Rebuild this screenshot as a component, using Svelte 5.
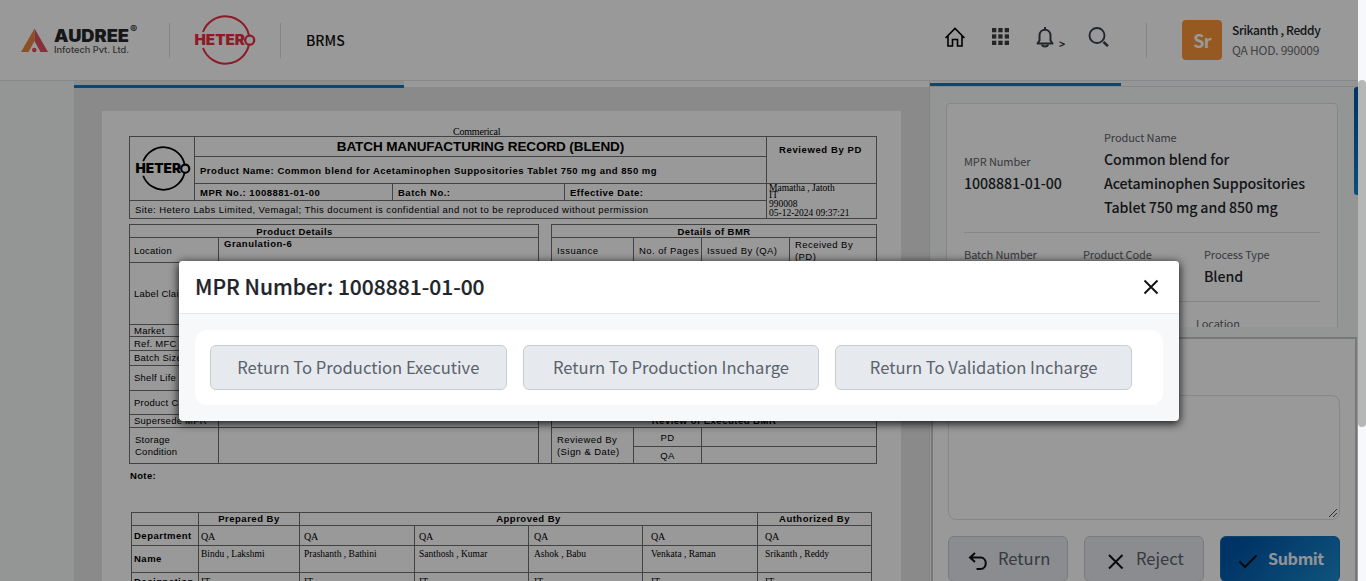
<script>
  const labels = [
    { text: 'Location', h: 25 },
    { text: 'Label Claim', h: 62 },
    { text: 'Market', h: 12 },
    { text: 'Ref. MFC No.', h: 14 },
    { text: 'Batch Size', h: 15 },
    { text: 'Shelf Life', h: 25 },
    { text: 'Product Code', h: 24 },
    { text: 'Supersede MPR', h: 13 }
  ];
  const approvers = [
    { name: 'Bindu , Lakshmi', pad: 2 },
    { name: 'Prashanth , Bathini', pad: 4 },
    { name: 'Santhosh , Kumar', pad: 4 },
    { name: 'Ashok , Babu', pad: 5 },
    { name: 'Venkata , Raman', pad: 8 },
    { name: 'Srikanth , Reddy', pad: 7 }
  ];
  const actions = ['Return To Production Executive', 'Return To Production Incharge', 'Return To Validation Incharge'];
</script>

{#snippet hetero(color, size)}
  <svg class="hetero" width={size} height={size * 50 / 60} viewBox="0 0 60 50" style:color={color}>
    <path d="M8 17A24 24 0 0 1 54 20.500M8 33A24 24 0 0 0 54 29.500" fill="none" stroke="currentColor" stroke-width="2" />
    <text x="-0.500" y="30.300" textLength="50.500" lengthAdjust="spacingAndGlyphs" font-size="14.500" fill="currentColor">HETER</text>
    <circle cx="54.700" cy="25.200" r="4.500" fill="none" stroke="currentColor" stroke-width="2.300" />
  </svg>
{/snippet}

<div class="app">
  <div class="page">
    <header>
      <svg class="audree" width="120" height="34" viewBox="0 0 120 34">
        <path d="M1 29L14.500 5.500V18L8.500 29Z" fill="#e8883c" />
        <path d="M14.500 5.500L28 29H20.500L14.500 18Z" fill="#e0505f" />
        <circle cx="14.300" cy="27" r="2.300" fill="#e0505f" />
        <text x="34" y="18.800" textLength="75" lengthAdjust="spacingAndGlyphs" class="brand">AUDREE</text>
        <text x="34" y="29.500" textLength="75" lengthAdjust="spacingAndGlyphs" class="sub">Infotech Pvt. Ltd.</text>
        <text x="110" y="10" class="reg">®</text>
      </svg>
      <i class="rule r1"></i>
      {@render hetero('#e8303f', 60)}
      <i class="rule r2"></i>
      <span class="app-name">BRMS</span>
      <nav>
        <svg width="22" height="22" viewBox="0 0 22 22"><path d="M1.500 12L11 2.500L20.500 12M4 10V20H8.500V13.500H13.500V20H18V10" fill="none" stroke="#000" stroke-width="1.600" /></svg>
        <svg width="18" height="18" viewBox="0 0 18 18" fill="#3f3f42">
          {#each [0, 6.3, 12.7] as y}{#each [0, 6.3, 12.7] as x}<rect {x} {y} width="4.300" height="4.300" />{/each}{/each}
        </svg>
        <svg width="18" height="22" viewBox="0 0 18 22" fill="none" stroke="#3a4048" stroke-width="2"><path d="M9 1V4M3.500 14.500V9.500C3.500 1.700 14.500 1.700 14.500 9.500V14.500L16.500 17.600H1.500Z" stroke-linejoin="round" /><path d="M6 18.500C6.500 21 11.500 21 12 18.500" /></svg>
        <b class="chev">&gt;</b>
        <svg class="search" width="22" height="22" viewBox="0 0 22 22" fill="none" stroke="#3a4048"><circle cx="9" cy="9.500" r="7.500" stroke-width="1.900" /><path d="M15.500 16L20 20.200" stroke-width="2.500" /></svg>
      </nav>
      <i class="rule r3"></i>
      <div class="avatar">Sr</div>
      <div class="user"><span class="uname">Srikanth , Reddy</span><span class="urole">QA HOD. 990009</span></div>
    </header>

    <main>
      <aside></aside>
      <section class="viewer">
        <div class="tabs"><div class="tab"></div></div>
        <div class="canvas">
          <div class="sheet">
            <div class="kind">Commerical</div>
            <div class="t1">
              <div class="c logo">{@render hetero('#000', 54)}</div>
              <div class="c title">BATCH MANUFACTURING RECORD (BLEND)</div>
              <div class="c rev">Reviewed By PD</div>
              <div class="c pname">Product Name: Common blend for Acetaminophen Suppositories Tablet 750 mg and 850 mg</div>
              <div class="c m1">MPR No.: 1008881-01-00</div>
              <div class="c m2">Batch No.:</div>
              <div class="c m3">Effective Date:</div>
              <div class="c sign"><span>Mamatha , Jatoth</span><span class="it">IT</span><span class="id">990008</span><span>05-12-2024 09:37:21</span></div>
              <div class="c site">Site: Hetero Labs Limited, Vemagal; This document is confidential and not to be reproduced without permission</div>
            </div>
            <div class="t2">
              <div class="left">
                <div class="c head">Product Details</div>
                {#each labels as l, i}
                  <div class="lrow" style:height="{l.h}px">
                    <div class="c lab">{l.text}</div>
                    <div class="c val">{i === 0 ? 'Granulation-6' : ''}</div>
                  </div>
                {/each}
                <div class="lrow last"><div class="c lab">Storage<br />Condition</div><div class="c val"></div></div>
              </div>
              <div class="gap"></div>
              <div class="right">
                <div class="c head">Details of BMR</div>
                <div class="iss">
                  <div class="c">Issuance</div><div class="c">No. of Pages</div><div class="c">Issued By (QA)</div><div class="c rec">Received By<br />(PD)</div>
                </div>
                <div class="c blank"></div>
                <div class="c head exe">Review of Executed BMR</div>
                <div class="exec">
                  <div class="c who">Reviewed By<br />(Sign &amp; Date)</div>
                  <div class="c mid">PD</div><div class="c"></div>
                  <div class="c mid qa">QA</div><div class="c"></div>
                </div>
              </div>
            </div>
            <div class="note">Note:</div>
            <div class="t3">
              <div class="c"></div><div class="c h">Prepared By</div><div class="c h span">Approved By</div><div class="c h">Authorized By</div>
              <div class="c k">Department</div>
              {#each approvers as a}<div class="c q" style:padding-left="{a.pad}px">QA</div>{/each}
              <div class="c k">Name</div>
              {#each approvers as a}<div class="c n" style:padding-left="{a.pad}px">{a.name}</div>{/each}
              <div class="c k d">Designation</div>
              {#each approvers as a}<div class="c n d" style:padding-left="{a.pad}px">IT</div>{/each}
            </div>
          </div>
        </div>
      </section>

      <section class="side">
        <div class="stabs"><div class="stab"></div></div>
        <div class="scroll">
          <div class="card">
            <div class="row one">
              <div><span class="label">MPR Number</span><strong>1008881-01-00</strong></div>
              <div><span class="label">Product Name</span><strong>Common blend for<br />Acetaminophen Suppositories<br />Tablet 750 mg and 850 mg</strong></div>
            </div>
            <div class="row two">
              <div><span class="label">Batch Number</span></div>
              <div><span class="label">Product Code</span></div>
              <div><span class="label">Process Type</span><strong>Blend</strong></div>
            </div>
            <div class="row three"><div><span class="label">Location</span></div></div>
          </div>
          <div class="thumb"></div>
        </div>
        <div class="review">
          <div class="area">
            <svg width="10" height="10" viewBox="0 0 10 10" stroke="#555" stroke-width="1"><path d="M1 9L9 1M5 9L9 5" /></svg>
          </div>
          <div class="btns">
            <div class="btn"><svg width="20" height="20" viewBox="0 0 20 20"><path d="M7 2L2 6.500L7 11M2 6.500H12.500C19.500 6.500 19.500 18 12.500 18H8.500" fill="none" stroke="#111" stroke-width="2" /></svg><span>Return</span></div>
            <div class="btn"><svg width="20" height="20" viewBox="0 0 20 20"><path d="M3 4L16.500 17.500M16.500 4L3 17.500" fill="none" stroke="#111" stroke-width="2" /></svg><span>Reject</span></div>
            <div class="btn primary"><svg width="20" height="20" viewBox="0 0 20 20"><path d="M1.500 10.500L7 16L18.500 4.500" fill="none" stroke="#111" stroke-width="2" /></svg><span>Submit</span></div>
          </div>
        </div>
      </section>
    </main>
    <div class="backdrop"></div>
  </div>
  <div class="bar"><div class="grip"></div></div>

  <div class="modal">
    <div class="mhead"><h4>MPR Number: 1008881-01-00</h4>
      <svg width="16" height="16" viewBox="0 0 16 16"><path d="M1.500 1.500L14.500 14.500M14.500 1.500L1.500 14.500" stroke="#111" stroke-width="1.900" /></svg>
    </div>
    <div class="mbody"><div class="mcard">{#each actions as a}<button>{a}</button>{/each}</div></div>
  </div>
</div>

<style>
  :global(body) { overflow: hidden; }
  .app, .app * { box-sizing: border-box; }
  .app { position: relative; display: flex; width: 1366px; height: 581px; overflow: hidden; background: #fff; font-family: "Noto Sans CJK SC", "Noto Sans", sans-serif; color: #212529; }
  .page { position: relative; width: 1358px; height: 581px; overflow: hidden; display: flex; flex-direction: column; }
  .backdrop { position: absolute; inset: 0; background: rgba(0, 0, 0, .4); }
  .bar { width: 8px; background: #f7f8fc; padding-top: 80px; }
  .grip { height: 347px; border-radius: 4px; background: #b5b7b6; }

  header { flex: none; height: 81px; border-bottom: 1px solid #e2e3ea; display: flex; align-items: center; padding-left: 20px; background: #fff; }
  .audree { flex: none; margin-bottom: 1px; }
  .audree text { font-family: Inter, sans-serif; fill: #26272b; }
  .audree .brand { font-size: 17px; font-weight: 900; }
  .audree .sub { font-size: 9px; font-weight: 500; fill: #555; }
  .audree .reg { font-size: 11px; font-weight: 700; }
  .hetero { flex: none; overflow: visible; }
  .hetero text { font-family: Inter, sans-serif; font-weight: 900; letter-spacing: 0; }
  .rule { flex: none; width: 1px; height: 35px; background: #dcdee3; }
  .r1 { margin: 0 25px 0 29px; }
  .r2 { margin: 0 25px 0 25px; }
  .app-name { width: 60px; font-size: 14px; font-weight: 500; line-height: 20px; color: #111; }
  nav { display: flex; align-items: center; margin-left: 577px; height: 24px; margin-bottom: 7px; width: 203px; }
  nav svg { flex: none; }
  nav svg:nth-of-type(1) { margin-left: 1px; }
  nav svg:nth-of-type(2) { margin-left: 26px; }
  nav svg:nth-of-type(3) { margin-left: 26px; }
  .chev { font: 700 11px/12px "Noto Sans", sans-serif; margin: 15px 0 0 5px; width: 10px; color: #333; }
  nav svg.search { margin-left: 19px; }
  .r3 { margin-right: 35px; }
  .avatar { width: 40px; height: 40px; border-radius: 4px; background: #fa9537; color: #fff; font-size: 18px; font-weight: 700; line-height: 40px; text-align: center; letter-spacing: -.8px; }
  .user { margin: 0 0 1px 10px; display: flex; flex-direction: column; white-space: nowrap; font-size: 12px; line-height: 20px; }
  .uname { font-weight: 500; letter-spacing: -.36px; }
  .urole { color: #6c6c70; letter-spacing: -.25px; }

  main { display: flex; height: 500px; }
  aside { width: 74px; background: #f5faf8; }
  .viewer { width: 855px; }
  .tabs { height: 6px; background: #fff; }
  .tab { width: 330px; height: 7px; background: #e0f0f5; border-bottom: 3px solid #0a79c9; position: relative; }
  .canvas { height: 494px; background: #e7e7e7; padding: 24px 0 0 28px; }
  .sheet { width: 799px; height: 470px; background: #fff; padding: 15px 0 0 27px; overflow: hidden; font: 9.5px/12px "Liberation Sans", Arial, sans-serif; color: #000; letter-spacing: .5px; white-space: nowrap; }
  .c { border-top: 1px solid #707070; border-left: 1px solid #707070; overflow: hidden; }
  .kind { font: 10px/12px "Liberation Serif", serif; letter-spacing: -.2px; width: 48px; margin-left: 324px; height: 10px; }
  .t1 { width: 748px; display: grid; grid-template-columns: 65px 198px 172px 202px 110px; grid-template-rows: 20px 27px 17px 18px; border: solid #707070; border-width: 0 1px 1px 0; font-weight: 700; }
  .logo { grid-row: 1 / 4; padding: 9px 0 0 6px; }
  .title { grid-column: 2 / 5; text-align: center; font-size: 13.5px; line-height: 19px; letter-spacing: -.1px; }
  .rev { grid-column: 5; grid-row: 1 / 3; text-align: center; padding: 7px 2px 0 0; letter-spacing: .6px; }
  .pname { grid-column: 2 / 5; grid-row: 2; padding: 8px 0 0 5px; letter-spacing: .515px; }
  .m1, .m2, .m3 { padding: 3px 0 0 5px; }
  .sign { grid-row: 3 / 5; grid-column: 5; font: 9.5px/9px "Liberation Serif", serif; display: flex; flex-direction: column; padding-left: 2px; letter-spacing: 0; }
  .it { margin-top: -2px; }
  .site { grid-row: 4; grid-column: 1 / 5; font-weight: 400; padding: 3px 0 0 5px; letter-spacing: .43px; }
  .t2 { display: flex; width: 748px; margin-top: 5px; height: 240px; border-bottom: 1px solid #707070; }
  .left { width: 410px; border-right: 1px solid #707070; }
  .gap { width: 12px; }
  .right { width: 326px; border-right: 1px solid #707070; letter-spacing: .43px; }
  .head { height: 13px; font-weight: 700; text-align: center; line-height: 13px; }
  .exe { line-height: 12px; letter-spacing: .5px; }
  .left .head { padding-right: 79px; letter-spacing: .45px; }
  .lrow { display: flex; }
  .lab { width: 89px; padding-left: 4px; display: flex; align-items: center; letter-spacing: .25px; }
  .lrow:nth-child(2) .lab { padding-top: 2px; }
  .val { flex: 1; padding-left: 5px; font-weight: 700; line-height: 11px; }
  .last { height: 37px; } .last .lab { padding-left: 5px; }
  .iss { display: grid; grid-template-columns: 82px 68px 88px 87px; height: 25px; }
  .iss .c { padding-left: 5px; line-height: 26px; } .iss .c.rec { line-height: 12px; padding-top: 1px; }
  .blank { height: 152px; }
  .exec { display: grid; grid-template-columns: 82px 68px 175px; grid-template-rows: 19px 18px; }
  .who { grid-row: 1 / 3; padding: 6px 0 0 5px; }
  .mid { text-align: center; line-height: 19px; }
  .mid.qa { line-height: 17px; }
  .note { font-weight: 700; margin: 6px 0 0 1px; height: 42px; letter-spacing: .35px; }
  .t3 { width: 741px; margin-left: 2px; display: grid; grid-template-columns: 67px 101px 115px 114px 114px 115px 114px; grid-template-rows: 13px 20px 27px 27px; border-right: 1px solid #707070; }
  .h { font-weight: 700; text-align: center; } .span { grid-column: 3 / 7; }
  .k { font-weight: 700; padding-left: 2px; display: flex; align-items: center; letter-spacing: .5px; }
  .q, .n { font: 10px/12px "Liberation Serif", serif; padding-top: 5px; letter-spacing: -.1px; }
  .n { font-size: 9.5px; padding-top: 2px; letter-spacing: 0; }
  .c.d { padding-top: 4px; line-height: 10px; align-items: flex-start; }

  .side { width: 429px; background: #f7faf9; border-left: 1px solid #d9dadd; display: flex; flex-direction: column; }
  .stabs { flex: none; height: 6px; border-bottom: 1px solid #e0e1e7; }
  .stab { width: 191px; height: 5px; border-bottom: 3px solid #0a79c9; }
  .scroll { flex: none; height: 240px; overflow: hidden; display: flex; justify-content: space-between; padding-left: 16px; }
  .card { margin-top: 16px; width: 392px; height: 330px; background: #fff; border: 1px solid #dde2e3; border-radius: 4px; padding: 22px 17px 0 17px; }
  .thumb { width: 4px; height: 108px; border-radius: 3px 0 0 3px; background: linear-gradient(#0057a8, #1681c4); }
  .row { display: grid; border-bottom: 1px solid #dde0e2; white-space: nowrap; }
  .label { display: block; font-size: 11px; line-height: 20px; color: #5c6066; letter-spacing: -.1px; }
  .row strong { display: block; font-size: 14.2px; line-height: 24px; font-weight: 500; color: #212529; letter-spacing: -.1px; }
  .one { grid-template-columns: 140px 1fr; align-items: center; height: 107px; padding-bottom: 12px; }
  .two { grid-template-columns: 119px 121px 1fr; height: 69px; padding-top: 11px; }
  .three { border: 0; padding: 11px 0 0 232px; }
  .review { flex: none; height: 244px; margin: 10px 1px 0 1px; border: 2px solid #c7c8ca; border-bottom: 0; background: #fff; padding: 56px 15px 0 15px; }
  .area { width: 392px; height: 125px; border: 1px solid #e0e1e3; border-radius: 8px; display: flex; align-items: flex-end; justify-content: flex-end; padding: 1px; }
  .btns { display: flex; gap: 16px; width: 392px; margin-top: 16px; }
  .btn { width: 120px; height: 46px; border: 1px solid #ccced3; border-radius: 6px; background: #e6e9ee; display: flex; align-items: center; padding-left: 19px; gap: 10px; font-size: 16.6px; color: #5a626b; }
  .btn svg { flex: none; margin-top: 3px; } .btn span { line-height: 24px; margin-top: -3px; }
  .btn:nth-child(2) { padding-left: 21px; }
  .btn.primary { background: linear-gradient(135deg, #0056ab 15%, #1a8ccf); border-color: #1470b5; color: #f4f6f8; font-weight: 700; font-size: 16.2px; letter-spacing: -.4px; padding-left: 17px; }

  .modal { position: absolute; left: 179px; top: 261px; width: 1000px; height: 160px; border-radius: 4px; background: #f7f8fa; box-shadow: 0 2px 9px 1px rgba(0, 0, 0, .8); overflow: hidden; }
  .mhead { height: 53px; background: #fff; border-bottom: 1px solid #e6e8ec; display: flex; align-items: center; justify-content: space-between; padding: 0 20px 0 16px; }
  h4 { margin: -2px 0 0; font-size: 21px; line-height: 30px; font-weight: 500; white-space: nowrap; -webkit-text-stroke: .2px #212529; }
  .mbody { padding: 16px; }
  .mcard { height: 75px; width: 968px; background: #fff; border-radius: 12px; padding: 15px 31px 15px 15px; display: grid; grid-template-columns: repeat(3, 1fr); gap: 16px; }
  button { font: 400 16.6px/24px "Noto Sans CJK SC", sans-serif; color: #5a626b; background: #e6e9ee; border: 1px solid #c9ccd1; border-radius: 6px; padding: 0 0 2px; white-space: nowrap; }
</style>
